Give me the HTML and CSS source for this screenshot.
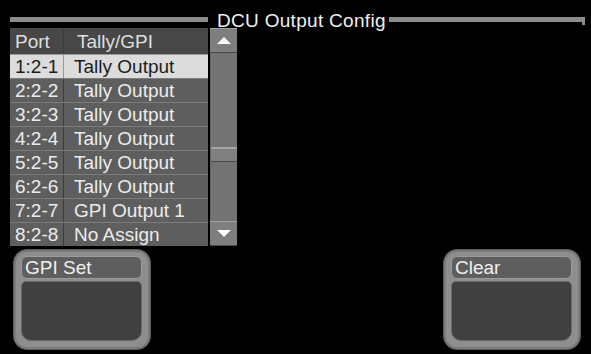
FILE: index.html
```html
<!DOCTYPE html>
<html lang="en">
<head>
    <meta charset="UTF-8">
    <meta name="viewport" content="width=device-width, initial-scale=1.0">
    <title>DCU Output Config</title>
    <link rel="stylesheet" href="styles.css">
</head>
<body>
    <div class="screen">
        <div class="title">
            <span class="title-line left"></span>
            <span class="title-text">DCU Output Config</span>
            <span class="title-line right"></span>
        </div>

        <div class="list-area">
            <div class="list">
                <div class="row head">
                    <span class="port">Port</span>
                    <span class="func">Tally/GPI</span>
                </div>
                <div class="row selected">
                    <span class="port">1:2-1</span>
                    <span class="func">Tally Output</span>
                </div>
                <div class="row">
                    <span class="port">2:2-2</span>
                    <span class="func">Tally Output</span>
                </div>
                <div class="row">
                    <span class="port">3:2-3</span>
                    <span class="func">Tally Output</span>
                </div>
                <div class="row">
                    <span class="port">4:2-4</span>
                    <span class="func">Tally Output</span>
                </div>
                <div class="row">
                    <span class="port">5:2-5</span>
                    <span class="func">Tally Output</span>
                </div>
                <div class="row">
                    <span class="port">6:2-6</span>
                    <span class="func">Tally Output</span>
                </div>
                <div class="row">
                    <span class="port">7:2-7</span>
                    <span class="func">GPI Output 1</span>
                </div>
                <div class="row">
                    <span class="port">8:2-8</span>
                    <span class="func">No Assign</span>
                </div>
            </div>

            <div class="scrollbar">
                <div class="scroll-btn"><span class="arrow up"></span></div>
                <div class="track">
                    <div class="thumb"></div>
                </div>
                <div class="scroll-btn"><span class="arrow down"></span></div>
            </div>
        </div>

        <div class="buttons">
            <div class="panel-btn">
                <div class="panel-label">GPI Set</div>
                <div class="panel-body"></div>
            </div>
            <div class="panel-btn">
                <div class="panel-label">Clear</div>
                <div class="panel-body"></div>
            </div>
        </div>
    </div>
</body>
</html>
```

FILE: styles.css
```css
body {
    margin: 0;
    padding: 0;
    background: #000;
    font-family: "Liberation Sans", Arial, sans-serif;
}

.screen {
    width: 591px;
    height: 354px;
    background: #000;
    overflow: hidden;
}

/* title bar */
.title {
    display: flex;
    align-items: flex-start;
    height: 28px;
    padding: 0 6px 0 10px;
}

.title-line {
    height: 5px;
    margin-top: 17px;
    background: #8c8c8c;
    position: relative;
}

.title-line.left {
    width: 198px;
    margin-right: 9px;
}

.title-line.right {
    flex: 1;
    margin-left: 3px;
}

.title-line.right::after {
    content: "";
    position: absolute;
    right: 0;
    top: 0;
    width: 3px;
    height: 8px;
    background: #8c8c8c;
}

.title-text {
    margin-top: 11px;
    line-height: 20px;
    font-size: 19px;
    color: #f0f0f0;
    letter-spacing: 0.3px;
    white-space: nowrap;
}

/* list */
.list-area {
    display: flex;
    padding-left: 10px;
    height: 218px;
}

.list {
    width: 198px;
    display: flex;
    flex-direction: column;
}

.row {
    display: flex;
    height: 23px;
    border-top: 1px solid #7c7c7c;
    background: #5e5e5e;
    color: #ececec;
    font-size: 19px;
    line-height: 24px;
    white-space: nowrap;
    overflow: hidden;
}

.row.head {
    height: 26px;
    line-height: 27px;
    border-top: none;
    background: #474747;
    color: #dedede;
}

.row.selected {
    background: #dcdcdc;
    color: #1c1c1c;
    border-top-color: #9a9a9a;
}

.port {
    width: 48px;
    padding-left: 5px;
    border-right: 1px solid #3c3c3c;
}

.row.selected .port {
    border-right-color: #9a9a9a;
}

.func {
    flex: 1;
    padding-left: 10px;
}

.row.head .func {
    padding-left: 13px;
}

/* scrollbar */
.scrollbar {
    width: 27px;
    margin-left: 2px;
    display: flex;
    flex-direction: column;
    background: #737373;
}

.scroll-btn {
    height: 25px;
    display: flex;
    align-items: center;
    justify-content: center;
    background: #7e7e7e;
    border-top: 1px solid #a0a0a0;
    border-bottom: 1px solid #4a4a4a;
    box-sizing: border-box;
}

.arrow {
    width: 0;
    height: 0;
    border-left: 7px solid transparent;
    border-right: 7px solid transparent;
}

.arrow.up {
    border-bottom: 7px solid #fff;
}

.arrow.down {
    border-top: 7px solid #fff;
}

.track {
    flex: 1;
    padding-top: 94px;
    border-left: 1px solid #666;
}

.thumb {
    height: 12px;
    background: #808080;
    border-top: 2px solid #a4a4a4;
    border-bottom: 1px solid #444;
}

/* bottom buttons */
.buttons {
    display: flex;
    justify-content: space-between;
    padding: 3px 10px 0 13px;
}

.panel-btn {
    width: 138px;
    height: 101px;
    box-sizing: border-box;
    padding: 6px 8px 8px 7px;
    border-radius: 14px;
    background: #8e8e8e;
    border: 1px solid #5c5c5c;
    box-shadow: inset 0 0 0 2px #7a7a7a;
    display: flex;
    flex-direction: column;
    gap: 2px;
}

.panel-label {
    height: 23px;
    box-sizing: border-box;
    border-radius: 6px;
    background: #5e5e5e;
    border: 1px solid #9c9c9c;
    color: #f0f0f0;
    font-size: 19px;
    line-height: 21px;
    padding-left: 3px;
}

.panel-body {
    flex: 1;
    background: #404040;
    border-radius: 5px 5px 10px 10px;
    border: 1px solid #6a6a6a;
}
```
